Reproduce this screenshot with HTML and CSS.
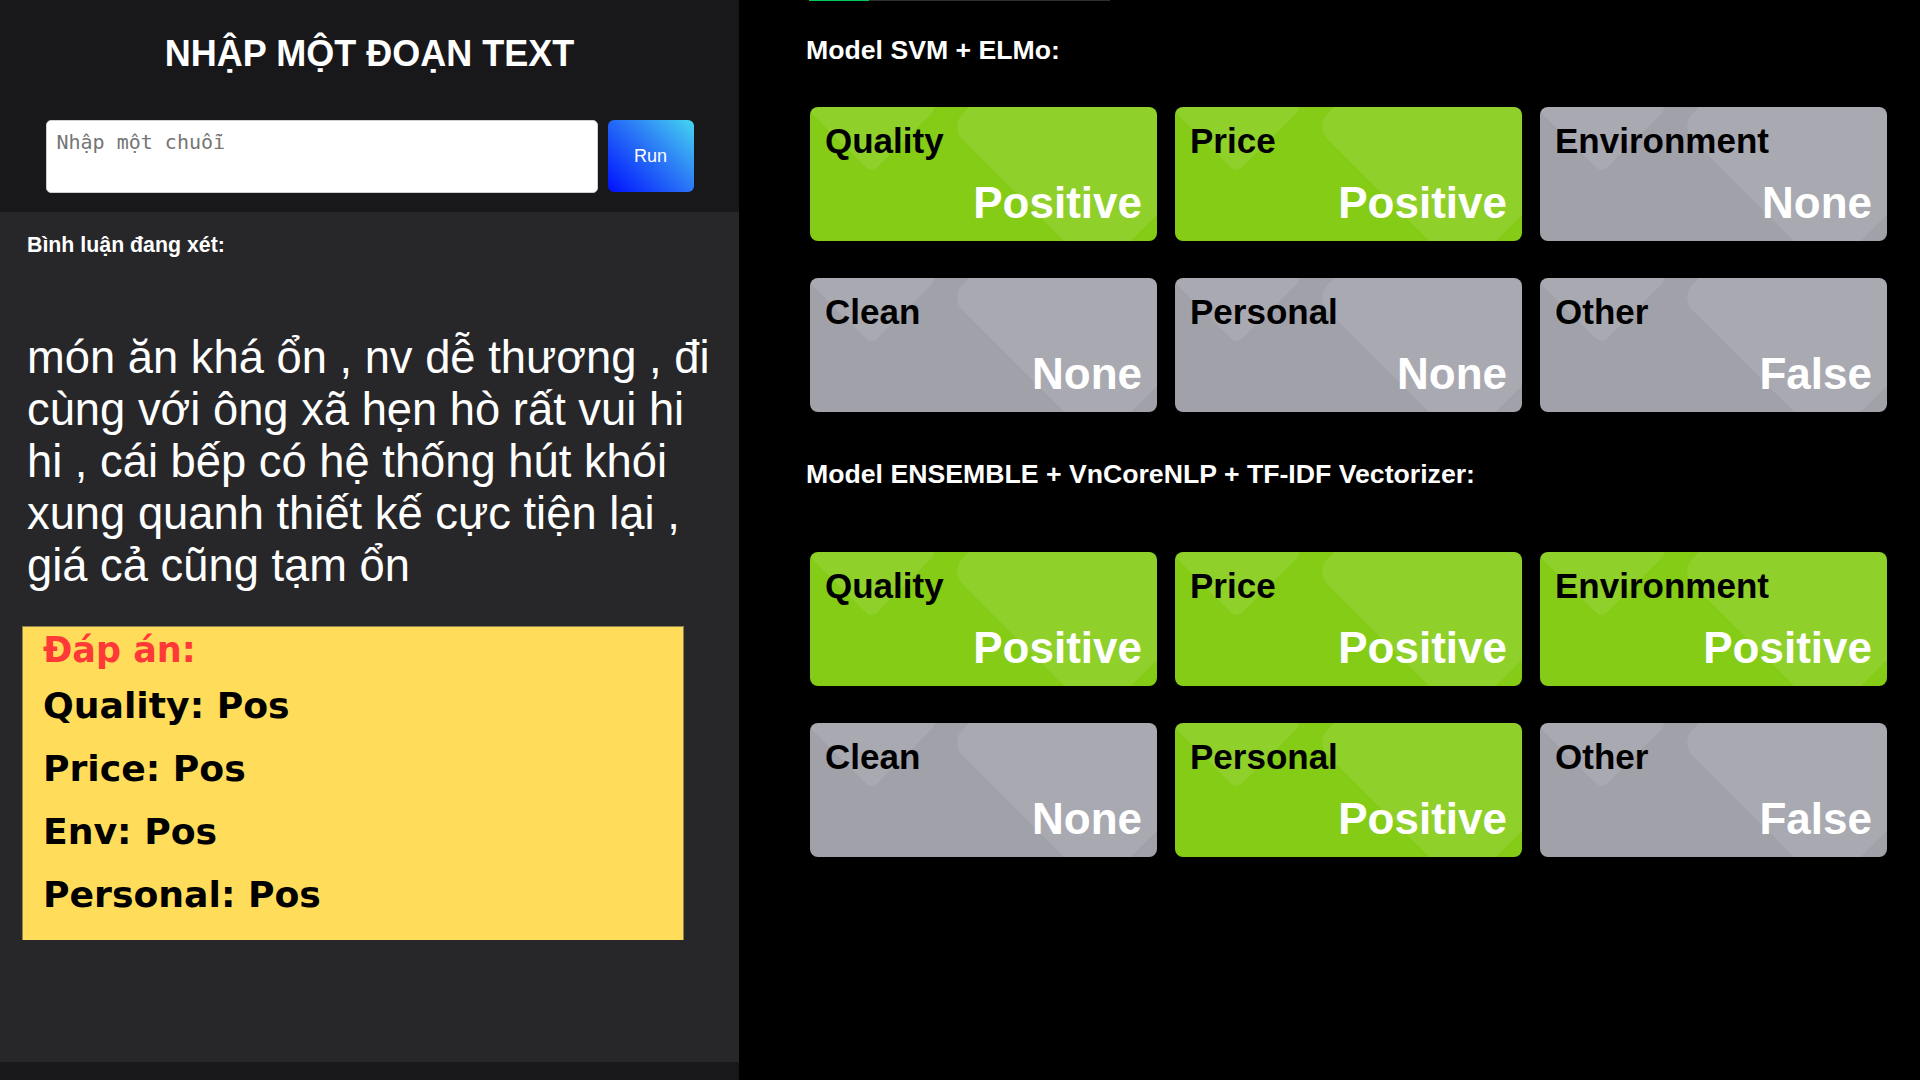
FILE: index.html
```html
<!DOCTYPE html>
<html lang="vi">
<head>
<meta charset="utf-8">
<title>Nhập một đoạn text</title>
<link rel="stylesheet" href="styles.css">
</head>
<body>
<div class="left">
  <div class="header">
    <h1 class="title">NHẬP MỘT ĐOẠN TEXT</h1>
    <div class="input-row">
      <textarea class="text-input" placeholder="Nhập một chuỗi"></textarea>
      <button class="run">Run</button>
    </div>
  </div>
  <div class="content">
    <div class="cmt-label">Bình luận đang xét:</div>
    <div class="comment">món ăn khá ổn , nv dễ thương , đi cùng với ông xã hẹn hò rất vui hi hi , cái bếp có hệ thống hút khói xung quanh thiết kế cực tiện lại , giá cả cũng tạm ổn</div>
    <div class="answer">
      <div class="ans-title">Đáp án:</div>
      <div class="ans-line">Quality: Pos</div>
      <div class="ans-line">Price: Pos</div>
      <div class="ans-line">Env: Pos</div>
      <div class="ans-line">Personal: Pos</div>
    </div>
  </div>
  <div class="strip"></div>
</div>
<div class="right">
  <div class="bar"><div class="bar-fill"></div></div>
  <h2 class="model-title">Model SVM + ELMo:</h2>
  <div class="grid">
    <div class="card pos"><span class="label">Quality</span><span class="value">Positive</span></div>
    <div class="card pos"><span class="label">Price</span><span class="value">Positive</span></div>
    <div class="card none"><span class="label">Environment</span><span class="value">None</span></div>
    <div class="card none"><span class="label">Clean</span><span class="value">None</span></div>
    <div class="card none"><span class="label">Personal</span><span class="value">None</span></div>
    <div class="card none"><span class="label">Other</span><span class="value">False</span></div>
  </div>
  <h2 class="model-title second">Model ENSEMBLE + VnCoreNLP + TF-IDF Vectorizer:</h2>
  <div class="grid grid-second">
    <div class="card pos"><span class="label">Quality</span><span class="value">Positive</span></div>
    <div class="card pos"><span class="label">Price</span><span class="value">Positive</span></div>
    <div class="card pos"><span class="label">Environment</span><span class="value">Positive</span></div>
    <div class="card none"><span class="label">Clean</span><span class="value">None</span></div>
    <div class="card pos"><span class="label">Personal</span><span class="value">Positive</span></div>
    <div class="card none"><span class="label">Other</span><span class="value">False</span></div>
  </div>
</div>
</body>
</html>
```
FILE: styles.css
```css
* { box-sizing: border-box; }

body {
  margin: 0;
  height: 1080px;
  overflow: hidden;
  display: flex;
  background: #000;
  font-family: "Liberation Sans", Arial, sans-serif;
}

.left {
  width: 739px;
  flex: none;
  display: flex;
  flex-direction: column;
  background: #27272a;
}

.header {
  height: 212px;
  flex: none;
  background: #18181b;
  padding-top: 33px;
}

.title {
  margin: 0;
  text-align: center;
  color: #fff;
  font-size: 36px;
  font-weight: 700;
  line-height: 42px;
}

.input-row {
  display: flex;
  justify-content: center;
  align-items: flex-start;
  gap: 10px;
  margin-top: 45px;
}

.text-input {
  width: 552px;
  height: 73px;
  resize: none;
  border: 1px solid #cfcfcf;
  border-radius: 5px;
  background: #fff;
  padding: 9px 10px;
  font-family: "DejaVu Sans Mono", "Liberation Mono", monospace;
  font-size: 20px;
  line-height: 24px;
  color: #222;
  outline: none;
}

.text-input::placeholder { color: #757575; }

.run {
  width: 86px;
  height: 72px;
  border: none;
  border-radius: 6px;
  background: linear-gradient(45deg, #0010ff 0%, #2a78f6 55%, #45d6f0 100%);
  color: #fff;
  font-family: "Liberation Sans", Arial, sans-serif;
  font-size: 18px;
  padding: 0;
}

.content {
  flex: 1;
  padding: 21px 22px 0;
}

.cmt-label {
  color: #fff;
  font-weight: 700;
  font-size: 21.33px;
  line-height: 24px;
  margin-left: 5px;
}

.comment {
  margin: 75px 5px 0 5px;
  color: #fff;
  font-size: 45.33px;
  line-height: normal;
}

.answer {
  width: 662px;
  height: 314px;
  margin-top: 34px;
  background: #ffdc5a;
  border: 1px solid #8f8350;
  border-bottom: none;
  padding: 0 20px;
  font-family: "DejaVu Sans", "Noto Sans", sans-serif;
  font-weight: 700;
  font-size: 36.2px;
  color: #000;
}

.ans-title {
  color: #ff3838;
  font-size: 35px;
  line-height: 47px;
}

.ans-line {
  line-height: 63px;
}

.strip {
  height: 18px;
  flex: none;
  background: #18181b;
}

.right {
  flex: 1;
  padding-left: 67px;
}

.bar {
  margin-left: 3px;
  width: 301px;
  height: 1px;
  background: #2e2e2e;
}

.bar-fill {
  width: 60px;
  height: 100%;
  background: #00c853;
}

.model-title {
  margin: 34px 0 0;
  color: #fff;
  font-size: 26.67px;
  font-weight: 700;
  line-height: 31px;
}

.model-title.second { margin-top: 47px; }

.grid {
  display: grid;
  grid-template-columns: repeat(3, 347px);
  column-gap: 18px;
  row-gap: 37px;
  margin: 41px 0 0 4px;
}

.grid-second { margin-top: 62px; }

.card {
  position: relative;
  overflow: hidden;
  height: 134px;
  border-radius: 8px;
  padding: 14px 15px 13px;
  display: flex;
  flex-direction: column;
  justify-content: space-between;
}

.card.pos { background: #84cc16; }
.card.none { background: #a1a1aa; }

.card::before,
.card::after {
  content: "";
  position: absolute;
  background: rgba(255, 255, 255, 0.09);
  transform: rotate(45deg);
}

.card::before {
  width: 93px;
  height: 93px;
  left: 15px;
  top: -46px;
  border-radius: 8px;
}

.card::after {
  width: 209px;
  height: 209px;
  left: 183px;
  top: -85px;
  border-radius: 18px;
}

.label,
.value {
  position: relative;
  z-index: 1;
  font-weight: 700;
}

.label {
  color: #000;
  font-size: 35px;
  line-height: 40px;
}

.value {
  color: #fff;
  font-size: 44px;
  line-height: 51px;
  text-align: right;
}
```
